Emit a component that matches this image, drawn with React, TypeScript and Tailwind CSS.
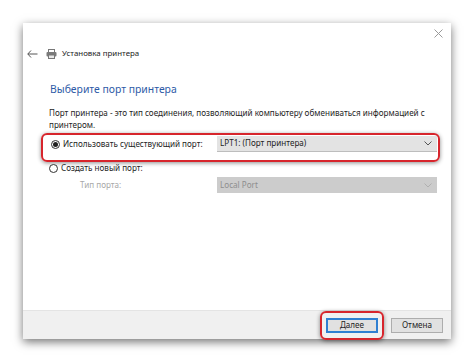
import { useState } from "react";

type Port = "existing" | "new";

function Radio({ checked }: { checked: boolean }) {
  return (
    <span className="flex h-[9px] w-[9px] shrink-0 items-center justify-center rounded-full border border-[#333] bg-white">
      {checked && <span className="h-[5px] w-[5px] rounded-full bg-[#222]" />}
    </span>
  );
}

function Chevron({ color }: { color: string }) {
  return (
    <svg width="8" height="5" viewBox="0 0 8 5" fill="none">
      <path d="M0.5 0.5 L4 4 L7.5 0.5" stroke={color} strokeWidth="1" />
    </svg>
  );
}

export default function App() {
  const [port, setPort] = useState<Port>("existing");

  return (
    <div
      className="h-[362px] w-[474px] overflow-hidden bg-white pl-[23px] pt-[23px] text-[#1e1e1e]"
      style={{ fontFamily: '"Noto Sans", "Open Sans", sans-serif' }}
    >
      <div className="flex h-[316px] w-[428px] flex-col bg-white shadow-[0_3px_9px_rgba(0,0,0,0.55)]">
        {/* title bar */}
        <div className="flex h-[20px] items-center justify-end pr-[8px]">
          <svg width="9" height="9" viewBox="0 0 9 9">
            <path d="M0.5 0.5 L8.5 8.5 M8.5 0.5 L0.5 8.5" stroke="#9a9a9a" strokeWidth="1" />
          </svg>
        </div>

        {/* back + wizard name */}
        <div className="flex h-[22px] items-center pl-[4px] text-[7.9px]">
          <svg width="11" height="8" viewBox="0 0 11 8" fill="none">
            <path d="M4 0.5 L0.8 4 L4 7.5 M0.8 4 H10.5" stroke="#555" strokeWidth="1" />
          </svg>
          <svg className="ml-[8px]" width="11" height="10" viewBox="0 0 11 10">
            <rect x="2.5" y="0.5" width="6" height="3" fill="#fff" stroke="#777" />
            <rect x="0.5" y="3" width="10" height="4.5" rx="1" fill="#7a7a7a" />
            <rect x="2.5" y="6" width="6" height="3.5" fill="#e8e8e8" stroke="#777" />
          </svg>
          <span className="ml-[5px] text-[#222]">Установка принтера</span>
        </div>

        {/* main instruction */}
        <h1 className="mt-[14px] pl-[27px] text-[10.4px] leading-[20px] text-[#2d5aa6]">
          Выберите порт принтера
        </h1>

        <p className="mt-[8px] pl-[26px] pr-[12px] text-[8.1px] leading-[12px] text-[#1e1e1e]">
          Порт принтера - это тип соединения, позволяющий компьютеру обмениваться информацией с
          принтером.
        </p>

        {/* existing port (highlighted) */}
        <div className="ml-[18px] mt-[2px] flex h-[29px] w-[399px] items-start rounded-[6px] border-2 border-[#d7252c] pt-[1px] shadow-[0_1px_4px_rgba(0,0,0,0.45)]">
          <label
            className="flex h-[16px] w-[174px] cursor-pointer items-center gap-[3px] whitespace-nowrap pl-[8px] text-[8.1px]"
            onClick={() => setPort("existing")}
          >
            <Radio checked={port === "existing"} />
            <span>Использовать существующий порт:</span>
          </label>
          <div className="flex h-[16px] w-[220px] items-center justify-between border-b border-[#bdbdbd] bg-[#e3e3e3] pl-[3px] pr-[5px] text-[8.1px]">
            <span>LPT1: (Порт принтера)</span>
            <Chevron color="#555" />
          </div>
        </div>

        {/* new port */}
        <label
          className="ml-[26px] flex h-[12px] cursor-pointer items-center gap-[3px] text-[8.1px]"
          onClick={() => setPort("new")}
        >
          <Radio checked={port === "new"} />
          <span>Создать новый порт:</span>
        </label>

        <div className="mt-[3px] flex h-[16px] items-center">
          <span className="w-[194px] pl-[57px] text-[8.1px] text-[#a8a8a8]">Тип порта:</span>
          <div className="flex h-[16px] w-[220px] items-center justify-between bg-[#cccccc] pl-[3px] pr-[5px] text-[8.1px] text-[#8e8e8e]">
            <span>Local Port</span>
            <Chevron color="#b0b0b0" />
          </div>
        </div>

        {/* footer */}
        <div className="mt-auto flex h-[29px] items-center justify-end gap-[7px] border-t border-[#e4e4e4] bg-[#f0f0f0] pr-[8px]">
          <div className="flex h-[29px] items-center rounded-[6px] border-2 border-[#d7252c] px-[4px] shadow-[0_1px_4px_rgba(0,0,0,0.45)]">
            <button className="h-[15px] w-[52px] border-2 border-[#2f7fd1] bg-[#e1e1e1] text-[8.1px] leading-none text-[#1e1e1e]">
              Далее
            </button>
          </div>
          <button className="h-[15px] w-[52px] border border-[#adadad] bg-[#e1e1e1] text-[8.1px] leading-none text-[#1e1e1e]">
            Отмена
          </button>
        </div>
      </div>
    </div>
  );
}
